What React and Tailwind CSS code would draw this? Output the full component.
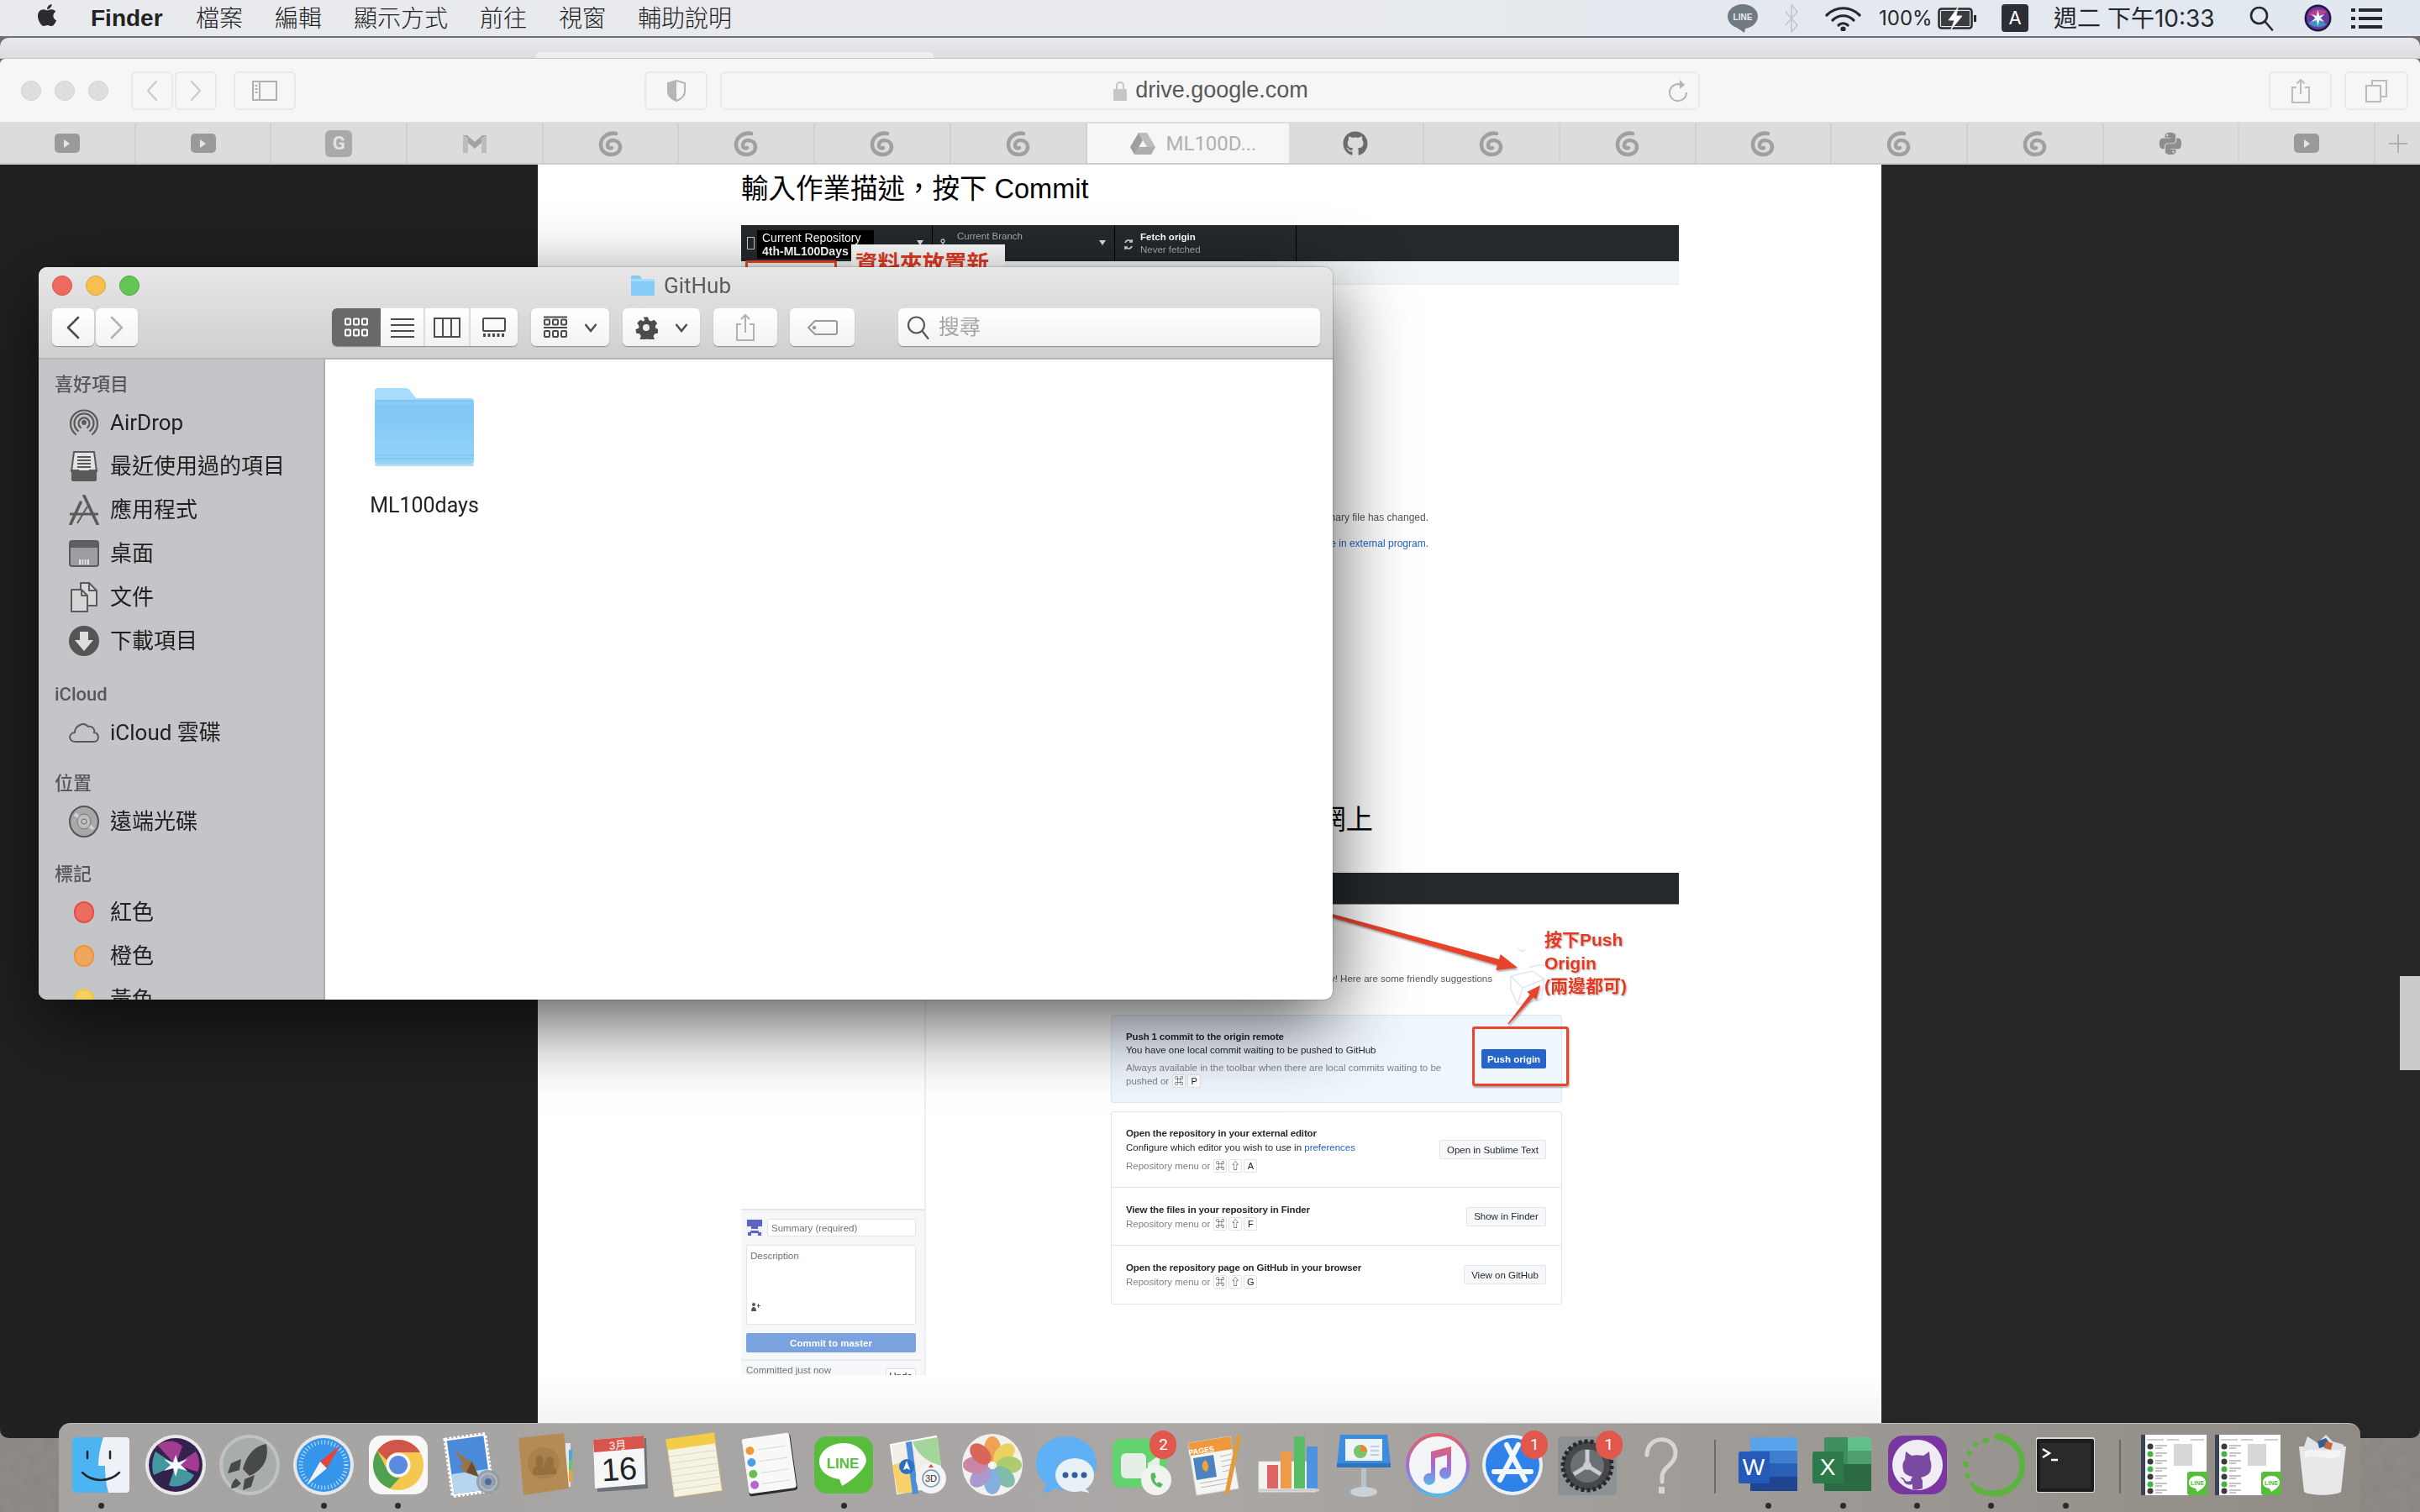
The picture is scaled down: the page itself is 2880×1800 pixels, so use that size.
import { FaApple, FaGithub, FaPython } from "react-icons/fa";

const menuItems = ["檔案", "編輯", "顯示方式", "前往", "視窗", "輔助說明"];

const Swirl = () => (
  <svg width="32" height="32" viewBox="0 0 32 32" fill="none" stroke="#a0a0a0" strokeWidth="4.500" strokeLinecap="round">
    <path d="M22 4C12 2 4 9 4 17c0 8 6 12 12 12 7 0 11-4 11-9 0-5-4-8-9-8-4 0-6 3-6 6 0 3 3 4 5 3" />
  </svg>
);

const Play = () => (
  <div className="w-[30px] h-[23px] rounded-[5px] bg-[#9a9a9a] flex items-center justify-center">
    <div className="w-0 h-0 border-y-[5px] border-y-transparent border-l-[7px] border-l-[#e6e6e6]" />
  </div>
);

const tabsLeft = [
  <Play />,
  <Play />,
  <div className="w-[32px] h-[32px] rounded-[6px] bg-[#a9a9a9] flex items-center justify-center text-[#e3e3e3] text-[22px] font-bold">G</div>,
  <svg width="32" height="24" viewBox="0 0 32 24">
    <path d="M2 2l5 0 9 8 9-8 5 0v21h-6V11l-8 7-8-7v12H2z" fill="#a3a3a3" />
    <path d="M2 2l6 3v18H2z" fill="#bcbcbc" />
    <path d="M30 2l-6 3v18h6z" fill="#bcbcbc" />
  </svg>,
  <Swirl />,
  <Swirl />,
  <Swirl />,
  <Swirl />,
];

const tabsRight = [
  <FaGithub className="text-[#6b6b6b] text-[30px]" />,
  <Swirl />,
  <Swirl />,
  <Swirl />,
  <Swirl />,
  <Swirl />,
  <FaPython className="text-[#8d8d8d] text-[30px]" />,
  <Play />,
];

const Glyph = ({ children, w = 36, h = 36, view = "0 0 36 36", c = "#545454", sw = 2.500, fill = "none" }) => (
  <svg width={w} height={h} viewBox={view} fill={fill} stroke={c} strokeWidth={sw} strokeLinecap="round" strokeLinejoin="round">
    {children}
  </svg>
);

const LightIcon = ({ color, edge }) => (
  <div className="w-[24px] h-[24px] rounded-full border" style={{ backgroundColor: color, borderColor: edge }} />
);

const MenuBar = () => (
  <div className="h-[45px] shrink-0 flex items-center bg-gradient-to-r from-[#e9eaee] via-[#e8eaee] to-[#e1e8f0] border-b-2 border-[#6d7178] text-[#222] text-[28px] pl-[41px] whitespace-nowrap font-['Inter','Noto_Sans_CJK_TC',sans-serif]">
    <FaApple className="text-[30px] text-[#2a2c30] -mt-[8px]" />
    <span className="ml-[37px] font-bold font-['Liberation_Sans'] w-[88px]">Finder</span>
    <div className="flex gap-[38px] ml-[37px]">
      {menuItems.map((m) => (
        <span key={m} className="font-light">{m}</span>
      ))}
    </div>
    <div className="ml-auto flex items-center pr-[45px]">
      <svg width="38" height="36" viewBox="0 0 38 36">
        <path d="M19 1C9 1 1 7.500 1 15.500 1 22 6 27 12 29l9 6 1-5c8-1 15-7 15-14.500C37 7.500 29 1 19 1z" fill="#6f7a83" />
        <text x="19" y="20" textAnchor="middle" fontSize="10" fontWeight="700" fill="#e8ecef" fontFamily="Liberation Sans">LINE</text>
      </svg>
      <svg className="ml-[31px]" width="16" height="34" viewBox="0 0 16 34" fill="none" stroke="#c2c6cb" strokeWidth="1.600">
        <path d="M1 9l14 16-7 8V1l7 8L1 25" />
      </svg>
      <svg className="ml-[32px]" width="43" height="30" viewBox="0 0 43 30" fill="none" stroke="#26282c" strokeWidth="3.200" strokeLinecap="round">
        <path d="M2 11C13 0 30 0 41 11" />
        <path d="M9 17c7-7 18-7 25 0" />
        <path d="M16 23c3-3 8-3 11 0" />
        <circle cx="21.500" cy="27.500" r="1.500" fill="#26282c" />
      </svg>
      <span className="ml-[21px] w-[61px] text-[24px] text-[#26282c]">100%</span>
      <svg className="ml-[9px]" width="46" height="26" viewBox="0 0 46 26">
        <rect x="1.500" y="1.500" width="39" height="23" rx="3" fill="none" stroke="#26282c" strokeWidth="2.500" />
        <rect x="43" y="9" width="3" height="8" fill="#26282c" />
        <rect x="4" y="4" width="34" height="18" fill="#3a3c40" />
        <path d="M24 0L13 15h7l-4 11 13-16h-7z" fill="#fff" stroke="#e8eaee" />
      </svg>
      <div className="ml-[30px] w-[32px] h-[33px] rounded-[4px] bg-[#2b2e33] text-white text-[22px] flex items-center justify-center">A</div>
      <span className="ml-[30px] w-[196px] text-[#26282c]">週二 下午10:33</span>
      <svg className="ml-[37px]" width="29" height="30" viewBox="0 0 29 30" fill="none" stroke="#26282c" strokeWidth="2.600" strokeLinecap="round">
        <circle cx="11.500" cy="11.500" r="9.500" />
        <path d="M18.500 18.500L27 28.500" />
      </svg>
      <svg className="ml-[36px]" width="33" height="33" viewBox="0 0 33 33">
        <circle cx="16.500" cy="16.500" r="16" fill="#1f1a3f" />
        <circle cx="16.500" cy="16.500" r="13.500" fill="#6b3a9c" />
        <path d="M5 12C10 6 20 4 27 9L16.500 16.500z" fill="#b9428f" />
        <path d="M5 22c5 6 15 7 22 2L16.500 16.500z" fill="#3f8fc4" />
        <path d="M16.500 7l1.800 7 6-2-4.600 4.500 4.600 4.500-6-2-1.800 7-1.800-7-6 2 4.600-4.500L8.700 12l6 2z" fill="#eefaff" />
      </svg>
      <div className="ml-[23px] w-[37px] flex flex-col gap-[6px]">
        {[0, 1, 2].map((i) => (
          <div key={i} className="flex gap-[4px] h-[4px]">
            <div className="w-[5px] bg-[#26282c]" />
            <div className="flex-1 bg-[#26282c]" />
          </div>
        ))}
      </div>
    </div>
  </div>
);

const ToolBtn = ({ className, children }) => (
  <div className={`h-[46px] rounded-[6px] border-2 border-[#e9e9e9] flex items-center justify-center ${className}`}>{children}</div>
);

const SafariChrome = () => (
  <>
    <div className="h-[25px] shrink-0 relative bg-gradient-to-b from-[#e8e9ec] to-[#dcdde0] border-b border-[#c5c5c8] rounded-t-[10px]">
      <div className="absolute left-[638px] bottom-0 w-[473px] h-[7px] rounded-t-[5px] bg-[#eeeeef]" />
    </div>
    <div className="h-[77px] shrink-0 bg-[#f6f6f6] border-b-2 border-[#dedede] flex items-center pl-[25px] rounded-t-[6px]">
      <div className="flex gap-[16px]">
        {[0, 1, 2].map((i) => (
          <div key={i} className="w-[24px] h-[24px] rounded-full bg-[#dedede] border border-[#d4d4d4]" />
        ))}
      </div>
      <ToolBtn className="w-[50px] ml-[27px]">
        <Glyph w={16} h={26} view="0 0 16 26" c="#c8c8c8" sw={2}><path d="M13 2L3 13l10 11" /></Glyph>
      </ToolBtn>
      <ToolBtn className="w-[50px] ml-[2px]">
        <Glyph w={16} h={26} view="0 0 16 26" c="#c8c8c8" sw={2}><path d="M3 2l10 11L3 24" /></Glyph>
      </ToolBtn>
      <ToolBtn className="w-[74px] ml-[20px]">
        <svg width="30" height="24" viewBox="0 0 30 24" fill="none" stroke="#b0b0b0" strokeWidth="2">
          <rect x="1" y="1" width="28" height="22" />
          <path d="M9 1v22" />
          <path d="M3.500 6h3M3.500 10h3M3.500 14h3" />
        </svg>
      </ToolBtn>
      <ToolBtn className="w-[75px] ml-[415px]">
        <svg width="24" height="26" viewBox="0 0 24 26">
          <path d="M12 1l10 3v10c0 6-5 9-10 11C7 23 2 20 2 14V4z" fill="none" stroke="#b5b5b5" strokeWidth="2" />
          <path d="M12 1L2 4v10c0 6 5 9 10 11z" fill="#b5b5b5" />
        </svg>
      </ToolBtn>
      <ToolBtn className="w-[1166px] ml-[15px] relative gap-[10px] pl-[2px]">
        <svg width="16" height="24" viewBox="0 0 16 24">
          <path d="M4 11V6a4 4 0 018 0v5" fill="none" stroke="#c6c6c6" strokeWidth="2" />
          <rect y="10" width="16" height="14" rx="1" fill="#c6c6c6" />
        </svg>
        <span className="text-[27px] text-[#595959] font-['Liberation_Sans']">drive.google.com</span>
        <svg className="absolute right-[11px] top-[7px]" width="24" height="30" viewBox="0 0 24 30" fill="none" stroke="#b5b5b5" strokeWidth="2">
          <path d="M15 7A10 10 0 1 0 21 16" />
          <path d="M13 1l6 6-6 5z" fill="#b5b5b5" stroke="none" />
        </svg>
      </ToolBtn>
      <ToolBtn className="w-[75px] ml-[677px]">
        <svg width="24" height="30" viewBox="0 0 24 30" fill="none" stroke="#bcbcbc" strokeWidth="2">
          <path d="M7 11H2v18h20V11h-5" />
          <path d="M12 19V2M7.500 6.500L12 2l4.500 4.500" />
        </svg>
      </ToolBtn>
      <ToolBtn className="w-[76px] ml-[15px]">
        <svg width="28" height="28" viewBox="0 0 28 28" fill="none" stroke="#bcbcbc" strokeWidth="2">
          <rect x="2" y="8" width="17" height="19" />
          <path d="M9 8V2h17v19h-7" />
        </svg>
      </ToolBtn>
    </div>
    <div className="h-[49px] shrink-0 bg-[#dcdcdc] border-b-2 border-[#cdcdcd] flex">
      {tabsLeft.map((icon, i) => (
        <div key={i} className="w-[161.700px] shrink-0 border-r-2 border-[#d0d0d0] flex items-center justify-center">{icon}</div>
      ))}
      <div className="w-[240px] shrink-0 bg-[#f6f6f6] flex items-center pl-[50px] gap-[12px] text-[24px] text-[#b0b0b0]">
        <svg width="32" height="28" viewBox="0 0 32 28" className="shrink-0">
          <path d="M11 1h10l10 17H21z" fill="#bdbdbd" />
          <path d="M11 1L1 18l5 9 10-17z" fill="#9e9e9e" />
          <path d="M6 27h20l5-9H11z" fill="#adadad" />
        </svg>
        <span>ML100D...</span>
      </div>
      {tabsRight.map((icon, i) => (
        <div key={i} className="w-[161.700px] shrink-0 border-r-2 border-[#d0d0d0] flex items-center justify-center">{icon}</div>
      ))}
      <div className="flex-1 flex items-center justify-center">
        <svg width="26" height="26" viewBox="0 0 26 26" stroke="#b0b0b0" strokeWidth="2"><path d="M13 2v22M2 13h22" /></svg>
      </div>
    </div>
  </>
);

const Kbd = ({ children }) => (
  <span className="inline-flex items-center justify-center w-[16px] h-[16px] ml-[2px] rounded-[2px] border border-[#dfe3e6] bg-white text-[11px] text-[#222]">{children}</span>
);

const Hint = ({ keys }) => (
  <div className="text-[#7b8288] flex items-center h-[16px]">
    Repository menu or
    <span className="ml-[2px] flex">
      {keys.map((k) => (
        <Kbd key={k}>{k}</Kbd>
      ))}
    </span>
  </div>
);

const Row = ({ title, sub, keys, action, actionWidth, className }) => (
  <div className={`flex justify-between items-center pl-[17px] pr-[18px] ${className}`}>
    <div className="flex flex-col gap-[1px]">
      <div className="font-semibold tracking-[-0.150px] text-[#24292e] h-[16px] flex items-center">{title}</div>
      {sub && <div className="text-[#24292e] h-[16px] flex items-center whitespace-pre">{sub}</div>}
      {sub && <div className="h-[4px]" />}
      <Hint keys={keys} />
    </div>
    <div className={`h-[23px] border border-[#e1e4e8] rounded-[2px] bg-[#f6f8fa] flex items-center justify-center text-[#24292e] shrink-0 ${actionWidth}`}>{action}</div>
  </div>
);

const PageContent = () => (
  <div className="relative w-[1599px] shrink-0 bg-white flex flex-col pl-[242px] font-['Liberation_Sans','Noto_Sans_CJK_TC',sans-serif]">
    <div className="h-[44px] mt-[7px] text-[32.500px] leading-[44px] text-black whitespace-nowrap">輸入作業描述，按下 Commit</div>

    <div className="w-[1116px] mt-[21px] h-[43px] bg-[#24292e] flex text-[11.500px] blur-[0.300px] shrink-0">
      <div className="w-[228px] border-r border-black flex items-center relative">
        <div className="ml-[7px] w-[9px] h-[15px] border border-[#ccc]" />
        <div className="absolute left-[19px] top-[6px] w-[139px] h-[34px] bg-black text-white text-[14px] leading-[16px] pl-[6px] pt-[1px] whitespace-nowrap overflow-hidden">
          <div>Current Repository</div>
          <div className="font-bold">4th-ML100Days</div>
        </div>
        <div className="absolute right-[10px] top-[18px] w-0 h-0 border-x-[4px] border-x-transparent border-t-[6px] border-t-[#ddd]" />
      </div>
      <div className="w-[217px] border-r border-black relative text-[#a3a9af]">
        <svg className="absolute left-[9px] top-[16px]" width="10" height="18" viewBox="0 0 10 18" fill="none" stroke="#ccc" strokeWidth="1.300">
          <circle cx="3" cy="3" r="2" /><path d="M3 5v11M3 12c4 0 5-2 5-5" />
        </svg>
        <div className="absolute left-[29px] top-[5px]">Current Branch</div>
        <div className="absolute right-[10px] top-[18px] w-0 h-0 border-x-[4px] border-x-transparent border-t-[6px] border-t-[#ddd]" />
      </div>
      <div className="w-[216px] border-r border-black relative">
        <svg className="absolute left-[10px] top-[15px]" width="12" height="16" viewBox="0 0 12 16" fill="none" stroke="#ddd" strokeWidth="1.600">
          <path d="M10 5a4.500 4.500 0 00-8 1M2 11a4.500 4.500 0 008-1" />
          <path d="M10 2v3H7M2 14v-3h3" />
        </svg>
        <div className="absolute left-[30px] top-[6px] font-bold text-white">Fetch origin</div>
        <div className="absolute left-[30px] top-[21px] text-[#a3a9af]">Never fetched</div>
      </div>
    </div>
    <div className="w-[1116px] h-[28px] shrink-0 bg-[#f2f5f7] border-b border-[#e6e8ea]" />

    <div className="w-[818px] h-[16px] mt-[269px] text-[12px] leading-[16px] text-[#555] whitespace-nowrap flex justify-end blur-[0.300px]">This binary file has changed.</div>
    <div className="w-[818px] h-[16px] mt-[15px] text-[12px] leading-[16px] text-[#2564c7] whitespace-nowrap flex justify-end blur-[0.300px]">Open file in external program.</div>

    <div className="w-[752px] h-[44px] mt-[299px] text-[32.500px] leading-[44px] text-black whitespace-nowrap flex justify-end">按下 Push Origin，把作業推到網上</div>

    <div className="w-[1116px] h-[38px] mt-[41px] shrink-0 bg-[#24292e] border-b border-[#999]" />

    <div className="w-[1116px] h-[560px] shrink-0 flex text-[11.500px] leading-[16px] blur-[0.300px]">
      <div className="w-[220px] shrink-0 border-r-2 border-[#edf0f2] flex flex-col justify-end overflow-hidden">
        <div className="h-[198px] bg-[#f5f7f9] border-t-2 border-[#e4e7ea] pl-[6px] pr-[10px] pt-[10px] relative shrink-0">
          <div className="flex gap-[5px]">
            <svg width="20" height="20" viewBox="0 0 20 20">
              <rect width="20" height="20" fill="#eef0f4" />
              <path d="M1 1h18v8H14v3H6V9H1zM5 14h10v2h3v4H14v-3H6v3H2v-4h3z" fill="#5b63c4" />
            </svg>
            <div className="flex-1 h-[21px] bg-white border border-[#e1e4e8] rounded-[2px] text-[#6a737d] pl-[4px] flex items-center">Summary (required)</div>
          </div>
          <div className="mt-[10px] h-[95px] bg-white border border-[#e1e4e8] rounded-[2px] text-[#6a737d] p-[4px] relative">
            Description
            <svg className="absolute left-[4px] bottom-[14px]" width="12" height="12" viewBox="0 0 12 12" fill="#555"><circle cx="4" cy="3" r="2" /><path d="M1 11c0-3 1-5 3-5s3 2 3 5zM8 4h1V2h1v2h2v1h-2v2H9V5H8z" /></svg>
          </div>
          <div className="mt-[10px] h-[23px] bg-[#7aa2df] rounded-[2px] text-white font-bold flex items-center justify-center">Commit to master</div>
          <div className="-mx-[6px] mt-[8px] border-t-2 border-[#e8ebee]" />
          <div className="absolute left-[6px] top-[182px] text-[#6a737d]">Committed just now</div>
          <div className="absolute right-[10px] top-[188px] w-[36px] h-[23px] border border-[#d9dce0] bg-white rounded-[2px] text-center text-[#333]">Undo</div>
        </div>
      </div>
      <div className="pl-[220px] w-[757px] shrink-0 flex flex-col text-[#24292e]">
        <div className="w-[454px] h-[16px] mt-[80px] text-[11.500px] text-[#555] flex justify-end whitespace-nowrap">There are no uncommitted changes in this repository! Here are some friendly suggestions</div>
        <div className="mt-[35px] w-[537px] h-[105px] bg-[#f0f6fe] border border-[#dbe8f8] rounded-[3px] pl-[17px] pr-[18px] flex justify-between items-center">
          <div className="w-[390px]">
            <div className="font-semibold tracking-[-0.150px]">Push 1 commit to the origin remote</div>
            <div>You have one local commit waiting to be pushed to GitHub</div>
            <div className="mt-[5px] text-[#7b8288] whitespace-nowrap">Always available in the toolbar when there are local commits waiting to be</div>
            <div className="text-[#7b8288] flex items-center">pushed or<span className="ml-[2px] flex"><Kbd>⌘</Kbd><Kbd>P</Kbd></span></div>
          </div>
          <div className="w-[77px] h-[23px] bg-[#2565c9] rounded-[2px] text-white font-bold flex items-center justify-center whitespace-nowrap">Push origin</div>
        </div>
        <div className="mt-[10px] w-[537px] h-[230px] border border-[#e1e4e8] rounded-[3px] flex flex-col">
          <Row
            title="Open the repository in your external editor"
            sub={<span>Configure which editor you wish to use in <span className="text-[#2564c7]">preferences</span></span>}
            keys={["⌘", "⇧", "A"]}
            action="Open in Sublime Text"
            actionWidth="w-[127px]"
            className="h-[90px] border-b border-[#e1e4e8]"
          />
          <Row title="View the files in your repository in Finder" keys={["⌘", "⇧", "F"]} action="Show in Finder" actionWidth="w-[95px]" className="h-[69px] border-b border-[#e1e4e8]" />
          <Row title="Open the repository page on GitHub in your browser" keys={["⌘", "⇧", "G"]} action="View on GitHub" actionWidth="w-[98px]" className="flex-1" />
        </div>
      </div>
    </div>
    <div className="flex-1 -ml-[242px] bg-gradient-to-b from-white to-[#f0f0f0]" />

    {/* annotations drawn on top of the pasted screenshots */}
    <div className="absolute left-[373px] top-[95px] w-[183px] h-[46px] bg-white pl-[5px] text-[26.500px] leading-[46px] font-bold text-[#e23b24] whitespace-nowrap overflow-hidden">資料夾放置新</div>
    <div className="absolute left-[247px] top-[114px] w-[109px] h-[60px] border-[3px] border-[#e8452a] rounded-[3px]" />

    <svg className="absolute left-[930px] top-[884px]" width="290" height="150" viewBox="0 0 290 150">
      <g fill="none" stroke="#dbe7f3" strokeWidth="1.500">
        <path d="M237 50c3 3 6 3 8 0M228 82l26-6 14 10-4 24-28 6-8-18zM228 82l14 14 26-10M242 96l-6 20" />
        <path d="M250 72c8-4 20-4 26 0" />
      </g>
      <g fill="#e8432a" className="drop-shadow-[1px_2px_1px_rgba(0,0,0,0.35)]">
        <polygon points="15.500,8.100 214,62.100 215.700,55.900 236,72 210.300,75.100 212,68.900 14.500,11.900" />
        <polygon points="225.500,139.400 254.700,106.900 258.200,109.800 263,93 247.400,100.800 250.900,103.700 224.500,138.600" />
      </g>
    </svg>
    <div className="absolute left-[1198px] top-[909px] text-[21px] leading-[27.500px] font-bold text-[#e5391f] whitespace-nowrap [text-shadow:0_0_2px_#fff,1px_1px_2px_#999]">
      <div>按下Push</div>
      <div>Origin</div>
      <div>(兩邊都可)</div>
    </div>
    <div className="absolute left-[1112px] top-[1026px] w-[115px] h-[71px] border-[3px] border-[#e8452a] rounded-[3px] shadow-[1px_2px_2px_rgba(0,0,0,0.3)]" />
  </div>
);

const SideRow = ({ icon, label }) => (
  <div className="h-[52px] flex items-center pl-[36px] shrink-0">
    <div className="w-[36px] h-[36px] flex items-center justify-center shrink-0">{icon}</div>
    <span className="ml-[13px] text-[26px] text-[#1f1f1f] whitespace-nowrap">{label}</span>
  </div>
);

const SideHead = ({ children, className }) => (
  <div className={`h-[40px] flex items-center pl-[19px] text-[22px] font-medium text-[#58585a] shrink-0 ${className}`}>{children}</div>
);

const Dot = ({ bg, edge }) => <div className={`w-[24px] h-[26px] rounded-full border-2 ${bg} ${edge}`} />;

const Seg = ({ active, border, children, w }) => (
  <div className={`h-full flex items-center justify-center ${w} ${active ? "bg-[#696969]" : ""} ${border ? "border-r-2 border-[#dcdcdc]" : ""}`}>{children}</div>
);

const Grid6 = ({ c }) => (
  <svg width="28" height="24" viewBox="0 0 28 24" fill="none" stroke={c} strokeWidth="2">
    <rect x="1" y="1.500" width="6" height="7" rx="1" /><rect x="11" y="1.500" width="6" height="7" rx="1" /><rect x="21" y="1.500" width="6" height="7" rx="1" />
    <rect x="1" y="14.500" width="6" height="7" rx="1" /><rect x="11" y="14.500" width="6" height="7" rx="1" /><rect x="21" y="14.500" width="6" height="7" rx="1" />
  </svg>
);

const Chevron = () => (
  <svg width="16" height="12" viewBox="0 0 16 12" fill="none" stroke="#4c4c4c" strokeWidth="2.400"><path d="M1.500 2L8 10l6.500-8" /></svg>
);

const FBtn = ({ className, children }) => (
  <div className={`h-[45px] rounded-[6px] bg-gradient-to-b from-white to-[#f2f2f2] shadow-[0_1px_1px_rgba(0,0,0,0.35)] flex items-center justify-center ${className}`}>{children}</div>
);

const Finder = () => (
  <div className="absolute left-[46px] top-[318px] w-[1540px] h-[872px] rounded-[10px] overflow-hidden bg-white flex flex-col shadow-[0_28px_90px_rgba(0,0,0,0.65),0_0_2px_rgba(0,0,0,0.5)]">
    <div className="h-[110px] shrink-0 bg-gradient-to-b from-[#e7e7e7] to-[#cfcfcf] border-b-2 border-[#b4b4b4] flex flex-col">
      <div className="h-[44px] relative flex items-center pl-[16px] gap-[16px]">
        <LightIcon color="#ee6a5f" edge="#d9534a" />
        <LightIcon color="#f6bf4f" edge="#dca33c" />
        <LightIcon color="#62c554" edge="#4fa944" />
        <div className="absolute left-[704px] top-0 h-[44px] flex items-center gap-[10px]">
          <svg width="30" height="26" viewBox="0 0 30 26">
            <path d="M1 2a1 1 0 011-1h9l3 4h14a1 1 0 011 1v18a1 1 0 01-1 1H2a1 1 0 01-1-1z" fill="#84cbf6" />
            <rect x="1" y="5" width="28" height="3" fill="#a6dcfc" />
          </svg>
          <span className="text-[26px] text-[#5b5b5b]">GitHub</span>
        </div>
      </div>
      <div className="flex items-center pt-[5px]">
        <FBtn className="w-[50px] ml-[16px]">
          <Glyph w={18} h={28} view="0 0 18 28" c="#4c4c4c" sw={2.600}><path d="M15 2L3 14l12 12" /></Glyph>
        </FBtn>
        <FBtn className="w-[50px] ml-[2px]">
          <Glyph w={18} h={28} view="0 0 18 28" c="#b3b3b3" sw={2.600}><path d="M3 2l12 12L3 26" /></Glyph>
        </FBtn>
        <FBtn className="w-[221px] ml-[231px] !justify-start overflow-hidden">
          <Seg active w="w-[58px]"><Grid6 c="#fff" /></Seg>
          <Seg border w="w-[53px]">
            <svg width="28" height="24" viewBox="0 0 28 24" stroke="#4c4c4c" strokeWidth="2"><path d="M0 2h28M0 9h28M0 16h28M0 23h28" /></svg>
          </Seg>
          <Seg border w="w-[54px]">
            <svg width="32" height="24" viewBox="0 0 32 24" fill="none" stroke="#4c4c4c" strokeWidth="2"><rect x="1" y="1" width="30" height="22" /><path d="M11 1v22M21 1v22" /></svg>
          </Seg>
          <Seg w="w-[56px]">
            <svg width="28" height="24" viewBox="0 0 28 24" fill="none" stroke="#4c4c4c" strokeWidth="2"><rect x="1" y="1" width="26" height="15" rx="1" /><path d="M1 21h26" strokeDasharray="3 2.500" strokeWidth="4" /></svg>
          </Seg>
        </FBtn>
        <FBtn className="w-[93px] ml-[16px] gap-[20px]">
          <svg width="28" height="28" viewBox="0 0 28 28" fill="none" stroke="#4c4c4c" strokeWidth="2">
            <path d="M0 1.500h28M0 14h28" />
            <rect x="1" y="4.500" width="6" height="6" rx="1" /><rect x="11" y="4.500" width="6" height="6" rx="1" /><rect x="21" y="4.500" width="6" height="6" rx="1" />
            <rect x="1" y="18" width="6" height="7" rx="1" /><rect x="11" y="18" width="6" height="7" rx="1" /><rect x="21" y="18" width="6" height="7" rx="1" />
          </svg>
          <Chevron />
        </FBtn>
        <FBtn className="w-[92px] ml-[16px] gap-[20px]">
          <svg width="28" height="28" viewBox="0 0 28 28" fill="#4c4c4c">
            <path d="M11 1h6l1 4 3 1.500 4-2 4 4.500-2.500 3.500.5 3 4 1.500-1 5-4 .5-2 3 1.500 4-5 3-3-3h-3l-3 3-5-3 1.500-4-2-3-4-.5-1-5 4-1.500.5-3L3 9l4-4.500 4 2L13 5z" transform="translate(0.500 0.500) scale(0.92)" />
            <circle cx="14" cy="14" r="4" fill="#eee" />
          </svg>
          <Chevron />
        </FBtn>
        <FBtn className="w-[76px] ml-[16px]">
          <svg width="24" height="34" viewBox="0 0 24 34" fill="none" stroke="#b2b2b2" strokeWidth="2">
            <path d="M7 13H2v19h20V13h-5" />
            <path d="M12 23V2M7 7l5-5 5 5" />
          </svg>
        </FBtn>
        <FBtn className="w-[77px] ml-[15px]">
          <svg width="36" height="18" viewBox="0 0 36 18" fill="none" stroke="#9a9a9a" strokeWidth="2">
            <path d="M9 1h24a2 2 0 012 2v12a2 2 0 01-2 2H9L1 9z" />
            <circle cx="8" cy="9" r="1.200" fill="#9a9a9a" />
          </svg>
        </FBtn>
        <FBtn className="w-[502px] ml-[52px] !justify-start pl-[10px] gap-[10px]">
          <svg width="28" height="30" viewBox="0 0 28 30" fill="none" stroke="#555" strokeWidth="2.200" strokeLinecap="round">
            <circle cx="11.500" cy="12" r="9.500" /><path d="M18.500 19l7 9" />
          </svg>
          <span className="text-[25px] text-[#a5a5a5]">搜尋</span>
        </FBtn>
      </div>
    </div>
    <div className="flex-1 flex min-h-0">
      <div className="w-[341px] shrink-0 bg-[#c4c5c8] border-r-2 border-[#adadaf] flex flex-col pt-[9px] overflow-hidden">
        <SideHead>喜好項目</SideHead>
        <SideRow
          label="AirDrop"
          icon={
            <Glyph c="#5a5a5a" sw={2.200}>
              <path d="M8 32A16 16 0 1128 32" /><path d="M11 28a11.500 11.500 0 1114 0" /><path d="M14 24a6.500 6.500 0 118 0" /><circle cx="18" cy="18" r="1.800" fill="#5a5a5a" />
            </Glyph>
          }
        />
        <SideRow
          label="最近使用過的項目"
          icon={
            <svg width="34" height="36" viewBox="0 0 34 36">
              <path d="M5 1h24l3 23H2z" fill="#e2e2e4" stroke="#5a5a5a" strokeWidth="2" />
              <path d="M9 7h16M9 11h16M9 15h16M9 19h16" stroke="#5a5a5a" strokeWidth="1.800" />
              <path d="M2 22h9c1 4 11 4 12 0h9v12a2 2 0 01-2 2H4a2 2 0 01-2-2z" fill="#5a5a5a" />
            </svg>
          }
        />
        <SideRow
          label="應用程式"
          icon={
            <svg width="36" height="36" viewBox="0 0 36 36" stroke="#5a5a5a" fill="none">
              <path d="M18 1L34 35M14 9L2 35" strokeWidth="3.500" strokeLinecap="round" />
              <path d="M1 23h34" strokeWidth="3" />
              <path d="M22 14l-12 20" strokeWidth="2" />
            </svg>
          }
        />
        <SideRow
          label="桌面"
          icon={
            <svg width="36" height="32" viewBox="0 0 36 32">
              <rect x="1" y="1" width="34" height="30" rx="3" fill="#9d9ea1" stroke="#5a5a5a" strokeWidth="2" />
              <rect x="2" y="2" width="32" height="7" fill="#5f5f61" />
              <path d="M12 23h12v6H12z" fill="#e6e6e6" />
              <path d="M15 23v6M18 23v6M21 23v6" stroke="#777" />
            </svg>
          }
        />
        <SideRow
          label="文件"
          icon={
            <svg width="32" height="36" viewBox="0 0 32 36" fill="#d6d6d8" stroke="#5a5a5a" strokeWidth="2" strokeLinejoin="round">
              <path d="M12 1h10l9 9v18H12z" /><path d="M22 1v9h9" fill="none" />
              <path d="M1 9h12l7 7v19H1z" /><path d="M13 9v7h7" fill="none" />
            </svg>
          }
        />
        <SideRow
          label="下載項目"
          icon={
            <svg width="36" height="36" viewBox="0 0 36 36">
              <circle cx="18" cy="18" r="18" fill="#555" />
              <path d="M13 7h10v10h6L18 30 7 17h6z" fill="#ddd" />
            </svg>
          }
        />
        <SideHead className="mt-[17px]">iCloud</SideHead>
        <SideRow
          label="iCloud 雲碟"
          icon={
            <svg width="36" height="24" viewBox="0 0 36 24" fill="none" stroke="#5a5a5a" strokeWidth="2">
              <path d="M8 23c-9 0-9-10-1-11 0-7 10-14 16-7 6-1 8 4 7 7 7 1 6 11 0 11z" />
            </svg>
          }
        />
        <SideHead className="mt-[14px]">位置</SideHead>
        <SideRow
          label="遠端光碟"
          icon={
            <svg width="36" height="38" viewBox="0 0 36 38">
              <ellipse cx="18" cy="19" rx="17" ry="18" fill="#a8a8aa" stroke="#555" strokeWidth="2" />
              <path d="M7 10l7 6M29 28l-7-6" stroke="#d2d2d4" strokeWidth="4" />
              <ellipse cx="18" cy="19" rx="8" ry="9" fill="#bdbdc0" stroke="#777" />
              <circle cx="18" cy="19" r="3" fill="#c4c5c8" stroke="#666" />
            </svg>
          }
        />
        <SideHead className="mt-[16px]">標記</SideHead>
        <SideRow label="紅色" icon={<Dot bg="bg-[#ec6c62]" edge="border-[#e64e42]" />} />
        <SideRow label="橙色" icon={<Dot bg="bg-[#eea75f]" edge="border-[#ee9436]" />} />
        <SideRow label="黃色" icon={<Dot bg="bg-[#f2d161]" edge="border-[#f0c63c]" />} />
      </div>
      <div className="flex-1 pl-[55px] pt-[34px]">
        <div className="w-[126px] flex flex-col items-center">
          <svg width="118" height="93" viewBox="0 0 118 93">
            <defs>
              <linearGradient id="folderBody" x1="0" y1="0" x2="0" y2="1">
                <stop offset="0" stopColor="#7dc6f4" />
                <stop offset="1" stopColor="#93d3f8" />
              </linearGradient>
            </defs>
            <path d="M0 4a4 4 0 014-4h32c3 0 5 1 6 3l7 9h65a4 4 0 014 4v70H0z" fill="#a8dcfd" />
            <rect y="14" width="118" height="76" rx="3" fill="url(#folderBody)" />
            <rect y="16" width="118" height="4" fill="#88ccf6" />
            <path d="M0 80h118M0 84h118" stroke="#7fc4f0" strokeWidth="1.500" />
            <rect y="90" width="118" height="3" rx="1.500" fill="#b9d9ee" />
          </svg>
          <span className="mt-[31px] h-[32px] text-[25px] leading-[32px] text-[#222] whitespace-nowrap">ML100days</span>
        </div>
      </div>
    </div>
  </div>
);

const T = ({ children, ...rest }) => (
  <text fontFamily="Liberation Sans, Noto Sans CJK TC, sans-serif" textAnchor="middle" {...rest}>{children}</text>
);

const dockIcons = {
  finder: (
    <>
      <rect x="6" y="7" width="68" height="66" rx="4" fill="#eef2f7" />
      <path d="M10 7h33c-4 12-6 24-6 34h8c0 10 1 22 4 32H10a4 4 0 01-4-4V11a4 4 0 014-4z" fill="#4db4f2" />
      <path d="M24 24v8M51 24v8" stroke="#22262c" strokeWidth="2.500" strokeLinecap="round" />
      <path d="M18 49c12 12 32 12 44 0" fill="none" stroke="#22262c" strokeWidth="2.500" strokeLinecap="round" />
    </>
  ),
  siri: (
    <>
      <circle cx="40" cy="40" r="36" fill="#e9e9ea" />
      <circle cx="40" cy="40" r="32" fill="#33224d" />
      <path d="M40 40L18 16c10-6 24-6 30 2zM40 40l24-16c4 6 6 18 2 24z" fill="#a13c91" />
      <path d="M40 40L14 52c-3-8-2-20 2-28zM40 40l22 12c-6 12-22 16-30 12z" fill="#47b6b4" opacity="0.800" />
      <path d="M40 28l3 9 11-4-8 7 8 7-11-3-3 10-3-10-11 3 8-7-8-7 11 4z" fill="#f2fbff" />
    </>
  ),
  rocket: (
    <>
      <circle cx="40" cy="40" r="36" fill="#bfc2c3" />
      <circle cx="40" cy="40" r="32" fill="#a9acad" />
      <path d="M60 15c-14 2-24 14-28 30l8 8c14-6 24-18 20-38z" fill="#47494b" />
      <path d="M30 33l-12 5-4 12 14-4zM46 52l-4 14-10 4 2-13zM24 56c-4 3-6 8-6 12 5 0 9-3 12-6z" fill="#47494b" />
    </>
  ),
  safari: (
    <>
      <circle cx="40" cy="40" r="36" fill="#e6e7e9" />
      <circle cx="40" cy="40" r="32" fill="#3595ea" />
      <circle cx="40" cy="40" r="27" fill="none" stroke="#cfe6fb" strokeWidth="5" strokeDasharray="1 3" />
      <path d="M60 16L36 36l8 8z" fill="#e5443a" />
      <path d="M20 64l24-20-8-8z" fill="#f4f4f4" />
    </>
  ),
  chrome: (
    <>
      <rect x="5" y="5" width="70" height="70" rx="15" fill="#f7f7f7" />
      <circle cx="40" cy="40" r="30" fill="#f4c84f" />
      <path d="M40 10a30 30 0 0126 15H40a15 15 0 00-14 9L15 23A30 30 0 0140 10z" fill="#d0564a" />
      <path d="M15 23l13 25a14 14 0 0014 7L30 68A30 30 0 0115 23z" fill="#4da14f" />
      <circle cx="40" cy="40" r="14.500" fill="#f7f7f7" />
      <circle cx="40" cy="40" r="11" fill="#5a8be0" />
    </>
  ),
  mail: (
    <>
      <rect x="-24" y="-34" width="48" height="68" fill="#fff" stroke="#fff" strokeWidth="4" strokeDasharray="3 2" transform="translate(36 40) rotate(-8)" />
      <g transform="translate(36 40) rotate(-8)">
        <rect x="-22" y="-32" width="44" height="64" fill="#4b8ad8" />
        <rect x="-22" y="8" width="44" height="24" fill="#b7d5ee" />
        <path d="M-14-20L8 2l-2 12-12-6-6-10 6 2z" fill="#9a7446" />
        <path d="M-4 8L10 16 4-4z" fill="#6b4e2e" />
      </g>
      <circle cx="59" cy="60" r="14" fill="#8d97a4" opacity="0.850" />
      <circle cx="59" cy="60" r="10" fill="none" stroke="#b3bac3" strokeWidth="2" />
      <circle cx="59" cy="60" r="4" fill="#4b6b9a" />
    </>
  ),
  contacts: (
    <>
      <path d="M62 14h6v52h-6z" fill="#e5e7e9" />
      <path d="M66 22h4v12h-4z" fill="#4ca6d9" /><path d="M66 34h4v12h-4z" fill="#67c279" /><path d="M66 46h4v14h-4z" fill="#e8a53a" />
      <path d="M6 8l54-6 6 66-54 8z" fill="#b58b55" />
      <circle cx="36" cy="38" r="19" fill="#a8814f" />
      <path d="M24 52c-2-6 0-9 4-11-3-4-2-12 3-13 5 1 6 9 3 13 4 2 6 6 5 11z" fill="#94703f" />
      <path d="M39 51c1-5-1-8-3-10 2-5 3-11 8-11 5 1 5 8 3 11 3 2 5 5 4 10z" fill="#94703f" />
    </>
  ),
  calendar: (
    <>
      <path d="M10 12l60-4 2 60-60 4z" fill="#6b7178" />
      <path d="M7 10l60-5 2 58-60 5z" fill="#f6f6f6" />
      <path d="M7 10l60-5 1 15-60 5z" fill="#d9544a" />
      <T x="36" y="21" fontSize="13" fill="#fff" transform="rotate(-4 36 16)">3月</T>
      <T x="38" y="58" fontSize="38" fill="#222" transform="rotate(-4 38 46)">16</T>
    </>
  ),
  notes: (
    <g transform="rotate(-8 40 40)">
      <rect x="10" y="5" width="58" height="70" fill="#f5f2e2" stroke="#c2ad7a" />
      <rect x="10" y="5" width="58" height="13" fill="#f3cd46" />
      <path d="M10 26h58M10 34h58M10 42h58M10 50h58M10 58h58M10 66h58" stroke="#dbd8c9" />
    </g>
  ),
  reminders: (
    <g transform="rotate(-8 40 40)">
      <rect x="11" y="6" width="58" height="68" rx="3" fill="#2c2c2c" />
      <rect x="11" y="5" width="57" height="66" rx="3" fill="#f8f8f8" />
      <circle cx="19" cy="20" r="5" fill="#f09a37" />
      <circle cx="19" cy="34" r="5" fill="#4a9fe6" />
      <circle cx="19" cy="48" r="5" fill="#68c04f" />
      <circle cx="19" cy="61" r="5" fill="#b467d5" />
      <path d="M28 20h34M28 34h34M28 48h34M28 61h34" stroke="#d8d8d8" />
    </g>
  ),
  line: (
    <>
      <rect x="5" y="6" width="70" height="68" rx="15" fill="#58bd3b" />
      <path d="M40 14c-16 0-29 10-29 22 0 11 10 19 24 21l3 8c5-3 24-14 29-29 0-12-12-22-27-22z" fill="#fff" />
      <T x="39" y="44" fontSize="17" fontWeight="700" fill="#58bd3b">LINE</T>
    </>
  ),
  maps: (
    <>
      <path d="M8 16L62 6l8 58-54 10z" fill="#f3efe6" stroke="#fff" strokeWidth="2" />
      <path d="M34 12l30-5 4 34c-14-4-28-12-34-29z" fill="#a3d69a" />
      <path d="M10 40l22-6 4 38-20 2z" fill="#f7d26a" />
      <path d="M26 13l7-1 8 62-7 1z" fill="#4a8fdc" />
      <circle cx="27" cy="42" r="9" fill="#2f6fc4" />
      <path d="M27 35l4 11-4-2-4 2z" fill="#fff" />
      <circle cx="56" cy="56" r="18" fill="#f4f4f4" />
      <circle cx="56" cy="56" r="10" fill="none" stroke="#6c9ab9" strokeWidth="1.500" />
      <T x="56" y="60" fontSize="11" fill="#333">3D</T>
      <path d="M56 39l3 4h-6z" fill="#d8453a" />
    </>
  ),
  photos: (
    <>
      <ellipse cx="40" cy="40" rx="36" ry="37" fill="#f1f1ef" />
      <g opacity="0.900">
        <ellipse cx="40" cy="21" rx="10" ry="15" fill="#ef9b42" />
        <ellipse cx="54" cy="27" rx="10" ry="15" fill="#e9d04f" transform="rotate(45 54 27)" />
        <ellipse cx="60" cy="40" rx="15" ry="10" fill="#a7c85f" />
        <ellipse cx="54" cy="54" rx="10" ry="15" fill="#75b6a2" transform="rotate(-45 54 54)" />
        <ellipse cx="40" cy="60" rx="10" ry="15" fill="#7aa9da" />
        <ellipse cx="26" cy="54" rx="10" ry="15" fill="#a68fca" transform="rotate(45 26 54)" />
        <ellipse cx="20" cy="40" rx="15" ry="10" fill="#c27b9c" />
        <ellipse cx="26" cy="27" rx="10" ry="15" fill="#d8584a" transform="rotate(-45 26 27)" />
      </g>
      <circle cx="40" cy="40" r="2" fill="#fff" />
    </>
  ),
  messages: (
    <>
      <path d="M40 6C20 6 4 20 4 38c0 12 6 20 12 25-1 5-3 8-5 10 6 0 11-2 15-5 4 1 9 2 14 2 20 0 36-14 36-32S60 6 40 6z" fill="#5fb0f5" />
      <ellipse cx="50" cy="52" rx="23" ry="20" fill="#e8f0f8" />
      <path d="M60 66l8 7-12-2z" fill="#e8f0f8" />
      <circle cx="39" cy="52" r="3.500" fill="#2f5f9a" /><circle cx="50" cy="52" r="3.500" fill="#2f5f9a" /><circle cx="61" cy="52" r="3.500" fill="#2f5f9a" />
    </>
  ),
  facetime: (
    <>
      <rect x="6" y="9" width="64" height="58" rx="10" fill="#62d36f" />
      <rect x="16" y="26" width="30" height="30" rx="6" fill="#e6efe6" />
      <path d="M48 38l14-10v28L48 46z" fill="#e6efe6" />
      <ellipse cx="58" cy="58" rx="18" ry="18" fill="#f1f3ee" />
      <path d="M52 50c-2 8 3 15 11 17l3-4-5-3-2 2c-2-1-3-4-3-6l2-1-2-6z" fill="#57b85a" />
    </>
  ),
  pages: (
    <>
      <path d="M8 14l50-8 10 62-50 8z" fill="#f5f5f3" stroke="#d8d8d8" />
      <path d="M8 14l50-8 3 15-50 8z" fill="#f0993c" />
      <T x="24" y="26" fontSize="9" fontWeight="700" fill="#fff" transform="rotate(-9 24 24)">PAGES</T>
      <path d="M14 32l24-4 4 26-24 4z" fill="#4c82bd" />
      <path d="M28 34c5 4 5 10 2 14-5-1-8-8-2-14z" fill="#f0a23c" />
      <path d="M46 30l14-3M47 36l14-3M48 42l14-3M49 48l14-3M22 62l34-6M23 67l34-6" stroke="#bbb" />
      <path d="M66 4l5 2-14 66-4 6-1-7z" fill="#e69a36" />
    </>
  ),
  numbers: (
    <>
      <path d="M4 36h68v36H4z" fill="#f3f3f3" stroke="#ddd" />
      <rect x="14" y="40" width="13" height="28" rx="1" fill="#e06363" />
      <rect x="30" y="24" width="13" height="44" rx="1" fill="#ee9a47" />
      <rect x="46" y="6" width="13" height="62" rx="1" fill="#59bd65" />
      <rect x="61" y="18" width="13" height="50" rx="1" fill="#4c93e2" />
      <path d="M4 70h72" stroke="#ccc" strokeWidth="3" />
    </>
  ),
  keynote: (
    <>
      <path d="M37 44h6v26h-6z" fill="#b9c2c8" />
      <ellipse cx="40" cy="72" rx="16" ry="6" fill="#c7d2da" />
      <path d="M12 4h56l4 36H8z" fill="#3c8ce0" />
      <rect x="8" y="38" width="64" height="5" fill="#2f74bf" />
      <rect x="18" y="9" width="44" height="26" fill="#eef3f8" />
      <circle cx="36" cy="24" r="8" fill="#7dc36b" />
      <path d="M36 24v-8a8 8 0 018 8z" fill="#e08a3c" />
      <path d="M48 18h10M48 23h10M48 28h10" stroke="#9ab" />
    </>
  ),
  itunes: (
    <>
      <circle cx="40" cy="40" r="36" fill="none" stroke="url(#itunesRing)" strokeWidth="4" />
      <circle cx="40" cy="40" r="34" fill="#f3f4f6" />
      <defs>
        <linearGradient id="itunesRing" x1="0" y1="0" x2="0" y2="1">
          <stop offset="0" stopColor="#e2606a" /><stop offset="0.500" stopColor="#a769d8" /><stop offset="1" stopColor="#55b7e8" />
        </linearGradient>
      </defs>
      <path d="M32 24l24-6v32a7 7 0 11-5-7V28l-14 4v25a7 7 0 11-5-7z" fill="url(#itunesRing)" />
    </>
  ),
  appstore: (
    <>
      <circle cx="40" cy="40" r="36" fill="#eceff3" />
      <circle cx="40" cy="40" r="32" fill="#2f82ea" />
      <g stroke="#f4f7fb" strokeWidth="6" strokeLinecap="round" fill="none">
        <path d="M33 16l22 42M47 16L25 58M18 48h44" />
      </g>
    </>
  ),
  prefs: (
    <>
      <rect x="6" y="6" width="70" height="70" rx="5" fill="#8d9094" />
      <circle cx="41" cy="41" r="29" fill="#45474a" />
      <circle cx="41" cy="41" r="29" fill="none" stroke="#26282a" strokeWidth="5" strokeDasharray="4 3" />
      <circle cx="41" cy="41" r="20" fill="#6b6e72" />
      <path d="M41 41V22M41 41L25 51M41 41l16 10" stroke="#c8ccd0" strokeWidth="5" />
      <circle cx="41" cy="41" r="5" fill="#c8ccd0" />
    </>
  ),
  help: (
    <>
      <path d="M24 28c0-24 34-24 34-2 0 14-16 16-16 28v6" fill="none" stroke="#d8d6d3" strokeWidth="5" strokeLinecap="round" />
      <rect x="38" y="66" width="7" height="8" fill="#d8d6d3" />
    </>
  ),
  word: (
    <>
      <rect x="18" y="7" width="56" height="64" rx="2" fill="#3f7fcf" />
      <rect x="18" y="7" width="56" height="16" fill="#58a3ea" />
      <rect x="18" y="38" width="56" height="16" fill="#2a5fb7" />
      <rect x="18" y="54" width="56" height="17" fill="#1f4590" />
      <rect x="4" y="24" width="37" height="38" rx="2" fill="#2559ba" />
      <T x="22" y="52" fontSize="28" fill="#fff">W</T>
    </>
  ),
  excel: (
    <>
      <rect x="18" y="7" width="56" height="64" rx="2" fill="#3e8f5e" />
      <rect x="46" y="7" width="28" height="16" fill="#64c08a" />
      <rect x="46" y="23" width="28" height="16" fill="#4ea06f" />
      <rect x="18" y="39" width="56" height="32" fill="#2c6a42" />
      <rect x="4" y="24" width="37" height="38" rx="2" fill="#2c7a4a" />
      <T x="22" y="52" fontSize="28" fill="#fff">X</T>
    </>
  ),
  github: (
    <>
      <rect x="5" y="5" width="70" height="70" rx="18" fill="#7a36a0" />
      <circle cx="40" cy="40" r="30" fill="#f0ecf4" />
      <path d="M26 24l7 5c4-1 10-1 14 0l7-5 1 10c2 3 2 12-1 16-3 3-7 4-10 5 1 1 2 3 2 5v8c-6 2-12 2-12 0v-5c-4 1-8 1-10-3-1-3-3-4-5-5 3-1 5 1 6 3s4 2 7 1c0-2 1-3 2-5-5-1-10-3-11-8-1-5-1-9 2-12z" fill="#7a4aa0" />
    </>
  ),
  ring: (
    <>
      <path d="M44 6a34 34 0 01-2 68c-12 0-20-5-22-8" fill="none" stroke="#5cb33e" strokeWidth="7" />
      <g fill="#5cb33e">
        <path d="M32 6l6 4-4 5-5-3z" /><path d="M20 12l5 2-2 5-5-2z" /><path d="M12 22l5 2-2 6-5-3z" /><path d="M6 36l6 0 1 6-6 1z" /><path d="M8 50l5-1 2 6-5 2z" /><path d="M14 62l4-2 3 5-4 2z" />
      </g>
    </>
  ),
  terminal: (
    <>
      <rect x="5" y="7" width="70" height="66" rx="3" fill="#d8d8d8" />
      <rect x="6" y="9" width="68" height="63" rx="2" fill="#1d1d1d" />
      <rect x="10" y="14" width="60" height="54" fill="#2a2a2a" />
      <path d="M13 21l8 5-8 5" fill="none" stroke="#fff" strokeWidth="2.500" />
      <path d="M23 34h8" stroke="#fff" strokeWidth="2.500" />
    </>
  ),
  trash: (
    <>
      <path d="M12 18h56l-6 54c-8 5-36 5-44 0z" fill="#e8e8e8" />
      <path d="M22 6l12 8 10-10 8 8 14 4-8 8H16z" fill="#dfe2e6" />
      <path d="M34 12l10-4 6 8-14 4z" fill="#3d5c8e" />
      <path d="M44 12l8 2-2 8-8-2z" fill="#c46a3a" />
      <path d="M18 24c12-5 20 0 44-2l-1 8c-16 6-30-4-42 2z" fill="#f6f6f6" opacity="0.800" />
    </>
  ),
};

const windowThumb = (
  <>
    <rect x="1" y="4" width="78" height="72" fill="#fff" />
    <rect x="1" y="4" width="5" height="72" fill="#3b4356" />
    <path d="M8 10h20M32 10h14M60 10h16" stroke="#cfcfcf" strokeWidth="2" />
    {[18, 27, 36, 45, 54, 63, 71].map((y, i) => (
      <g key={y}>
        <circle cx="12" cy={y} r="3.500" fill={i % 2 ? "#42b549" : "#3a3a3a"} />
        <path d={`M18 ${y - 1}h14M18 ${y + 2}h8`} stroke="#8a8a8a" />
      </g>
    ))}
    <rect x="40" y="15" width="22" height="26" fill="#d7d7d7" />
    <rect x="56" y="48" width="25" height="28" rx="3" fill="#58bd3b" />
    <path d="M68 53c-6 0-10 3-10 8 0 4 3 6 8 7l2 4c3-2 10-6 10-11 0-5-4-8-10-8z" fill="#fff" />
    <T x="68" y="64" fontSize="7" fontWeight="700" fill="#58bd3b">LINE</T>
  </>
);

const dockApps = [
  { k: "finder", dot: true },
  { k: "siri" },
  { k: "rocket" },
  { k: "safari", dot: true },
  { k: "chrome", dot: true },
  { k: "mail" },
  { k: "contacts" },
  { k: "calendar" },
  { k: "notes" },
  { k: "reminders" },
  { k: "line", dot: true },
  { k: "maps" },
  { k: "photos" },
  { k: "messages" },
  { k: "facetime", badge: "2" },
  { k: "pages" },
  { k: "numbers" },
  { k: "keynote" },
  { k: "itunes" },
  { k: "appstore", badge: "1" },
  { k: "prefs", badge: "1" },
  { k: "help" },
  { sep: true },
  { k: "word", dot: true },
  { k: "excel", dot: true },
  { k: "github", dot: true },
  { k: "ring", dot: true },
  { k: "terminal", dot: true },
  { sep: true },
  { thumb: true },
  { thumb: true },
  { k: "trash" },
];

const Dock = () => (
  <div className="absolute left-[70px] top-[1694px] w-[2739px] h-[106px] rounded-t-[14px] bg-gradient-to-r from-[#a5a4a3] via-[#aaa7a5] to-[#908c85] border-t border-[#bdbcba] flex pl-[6px] pt-[9px]">
    {dockApps.map((app, i) =>
      app.sep ? (
        <div key={i} className="w-[40px] shrink-0 flex justify-center">
          <div className="w-[2px] h-[64px] mt-[10px] bg-[#6f6a66]" />
        </div>
      ) : (
        <div key={i} className="w-[88.400px] shrink-0 flex flex-col items-center relative">
          <svg width="80" height="80" viewBox="0 0 80 80">{app.thumb ? windowThumb : dockIcons[app.k]}</svg>
          {app.dot && <div className="w-[7px] h-[7px] mt-[5px] rounded-full bg-[#2b2b2b]" />}
          {app.badge && (
            <div className="absolute left-[55px] -top-[1px] w-[32px] h-[34px] rounded-full bg-[#e2574c] text-white text-[19px] flex items-center justify-center">{app.badge}</div>
          )}
        </div>
      )
    )}
  </div>
);

const App = () => (
  <div className="relative w-[2880px] h-[1800px] overflow-hidden bg-[#6f6a64] font-['Roboto','Noto_Sans_CJK_TC',sans-serif]">
    <svg className="absolute left-0 top-[1690px]" width="2880" height="110">
      <filter id="wallNoise">
        <feTurbulence type="fractalNoise" baseFrequency="0.060" numOctaves="3" seed="4" />
        <feColorMatrix values="0 0 0 0 0.25  0 0 0 0 0.24  0 0 0 0 0.22  1.800 0 0 0 -0.500" />
      </filter>
      <rect width="2880" height="110" fill="#8e8a85" />
      <rect width="2880" height="110" filter="url(#wallNoise)" />
    </svg>
    <div className="relative flex flex-col h-[1712px]">
      <MenuBar />
      <SafariChrome />
      <div className="flex-1 flex min-h-0 rounded-b-[10px] overflow-hidden">
        <div className="w-[640px] shrink-0 bg-[#212121]" />
        <PageContent />
        <div className="flex-1 bg-[#262626] relative">
          <div className="absolute right-0 top-[966px] w-[24px] h-[112px] bg-[#cacaca]" />
        </div>
      </div>
    </div>
    <Finder />
    <Dock />
  </div>
);

export default App;
